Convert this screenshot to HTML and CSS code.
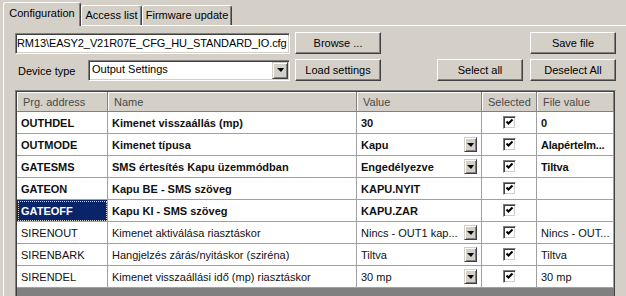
FILE: index.html
```html
<!DOCTYPE html>
<html lang="hu">
<head>
    <meta charset="UTF-8">
    <title>Configuration</title>
    <link rel="stylesheet" href="styles.css">
</head>
<body>
    <!-- tab strip -->
    <div class="tabs">
        <div class="tab active tab-config">Configuration</div>
        <div class="tab tab-access">Access list</div>
        <div class="tab tab-firmware">Firmware update</div>
    </div>

    <div class="panel">
        <div class="toolbar">
            <div class="textbox">RM13\EASY2_V21R07E_CFG_HU_STANDARD_IO.cfg</div>
            <button class="btn">Browse ...</button>
            <div class="spacer"></div>
            <button class="btn">Save file</button>
        </div>

        <div class="toolbar second">
            <label class="label">Device type</label>
            <div class="combo">
                <span class="combo-text">Output Settings</span>
                <span class="combo-btn"><i class="arrow"></i></span>
            </div>
            <button class="btn">Load settings</button>
            <div class="spacer"></div>
            <button class="btn">Select all</button>
            <button class="btn last">Deselect All</button>
        </div>

        <!-- settings grid -->
        <div class="grid">
            <div class="grid-inner">
                <div class="row head">
                    <div class="hcell">Prg. address</div>
                    <div class="hcell">Name</div>
                    <div class="hcell">Value</div>
                    <div class="hcell">Selected</div>
                    <div class="hcell">File value</div>
                </div>

                <div class="row bold">
                    <div class="cell">OUTHDEL</div>
                    <div class="cell">Kimenet visszaállás (mp)</div>
                    <div class="cell">30</div>
                    <div class="cell center"><span class="check"><svg width="9" height="9" viewBox="0 0 9 9"><polyline points="1.5,3.5 3.5,5.5 7.5,1.5" fill="none" stroke="#000" stroke-width="2"/></svg></span></div>
                    <div class="cell file">0</div>
                </div>
                <div class="row bold">
                    <div class="cell">OUTMODE</div>
                    <div class="cell">Kimenet típusa</div>
                    <div class="cell pick">Kapu<span class="drop"><i class="arrow"></i></span></div>
                    <div class="cell center"><span class="check"><svg width="9" height="9" viewBox="0 0 9 9"><polyline points="1.5,3.5 3.5,5.5 7.5,1.5" fill="none" stroke="#000" stroke-width="2"/></svg></span></div>
                    <div class="cell file">Alapértelm...</div>
                </div>
                <div class="row bold">
                    <div class="cell">GATESMS</div>
                    <div class="cell">SMS értesítés Kapu üzemmódban</div>
                    <div class="cell pick">Engedélyezve<span class="drop"><i class="arrow"></i></span></div>
                    <div class="cell center"><span class="check"><svg width="9" height="9" viewBox="0 0 9 9"><polyline points="1.5,3.5 3.5,5.5 7.5,1.5" fill="none" stroke="#000" stroke-width="2"/></svg></span></div>
                    <div class="cell file">Tiltva</div>
                </div>
                <div class="row bold">
                    <div class="cell">GATEON</div>
                    <div class="cell">Kapu BE - SMS szöveg</div>
                    <div class="cell">KAPU.NYIT</div>
                    <div class="cell center"><span class="check"><svg width="9" height="9" viewBox="0 0 9 9"><polyline points="1.5,3.5 3.5,5.5 7.5,1.5" fill="none" stroke="#000" stroke-width="2"/></svg></span></div>
                    <div class="cell file"></div>
                </div>
                <div class="row bold">
                    <div class="cell focus">GATEOFF</div>
                    <div class="cell">Kapu KI - SMS szöveg</div>
                    <div class="cell">KAPU.ZAR</div>
                    <div class="cell center"><span class="check"><svg width="9" height="9" viewBox="0 0 9 9"><polyline points="1.5,3.5 3.5,5.5 7.5,1.5" fill="none" stroke="#000" stroke-width="2"/></svg></span></div>
                    <div class="cell file"></div>
                </div>
                <div class="row">
                    <div class="cell">SIRENOUT</div>
                    <div class="cell">Kimenet aktiválása riasztáskor</div>
                    <div class="cell pick">Nincs - OUT1 kap...<span class="drop"><i class="arrow"></i></span></div>
                    <div class="cell center"><span class="check"><svg width="9" height="9" viewBox="0 0 9 9"><polyline points="1.5,3.5 3.5,5.5 7.5,1.5" fill="none" stroke="#000" stroke-width="2"/></svg></span></div>
                    <div class="cell file">Nincs - OUT...</div>
                </div>
                <div class="row">
                    <div class="cell">SIRENBARK</div>
                    <div class="cell">Hangjelzés zárás/nyitáskor (sziréna)</div>
                    <div class="cell pick">Tiltva<span class="drop"><i class="arrow"></i></span></div>
                    <div class="cell center"><span class="check"><svg width="9" height="9" viewBox="0 0 9 9"><polyline points="1.5,3.5 3.5,5.5 7.5,1.5" fill="none" stroke="#000" stroke-width="2"/></svg></span></div>
                    <div class="cell file">Tiltva</div>
                </div>
                <div class="row">
                    <div class="cell">SIRENDEL</div>
                    <div class="cell">Kimenet visszaállási idő (mp) riasztáskor</div>
                    <div class="cell pick">30 mp<span class="drop"><i class="arrow"></i></span></div>
                    <div class="cell center"><span class="check"><svg width="9" height="9" viewBox="0 0 9 9"><polyline points="1.5,3.5 3.5,5.5 7.5,1.5" fill="none" stroke="#000" stroke-width="2"/></svg></span></div>
                    <div class="cell file">30 mp</div>
                </div>
            </div>
        </div>
    </div>
</body>
</html>
```

FILE: styles.css
```css
* {
    box-sizing: border-box;
    margin: 0;
    padding: 0;
}

body {
    font-family: "Liberation Sans", Arial, sans-serif;
    font-size: 11px;
    color: #000;
    background: #d4d0c8;
    height: 296px;
    overflow: hidden;
}

/* tabs */
.tabs {
    display: flex;
    align-items: flex-end;
    height: 25px;
    padding: 2px 0 0 3px;
}

.tab {
    height: 20px;
    display: flex;
    align-items: center;
    justify-content: center;
    border: 1px solid #fff;
    border-bottom: none;
    border-right-color: #404040;
    border-radius: 3px 3px 0 0;
    box-shadow: inset -1px 0 #808080;
    padding-bottom: 1px;
}

.tab.active {
    height: 24px;
    margin-bottom: -1px;
    position: relative;
    z-index: 1;
    background: #d4d0c8;
    padding-bottom: 4px;
}

.tab-config { width: 78px; }
.tab-access { width: 61px; }
.tab-firmware { width: 90px; }

/* page panel */
.panel {
    margin-left: 3px;
    border-top: 1px solid #fff;
    border-left: 1px solid #fff;
    padding: 6px 10px 0 11px;
}

.toolbar {
    display: flex;
    align-items: center;
    height: 22px;
}

.toolbar.second {
    margin-top: 5px;
}

.spacer {
    flex: 1;
}

.textbox {
    width: 275px;
    height: 21px;
    margin-right: 5px;
    background: #fff;
    border: 1px solid;
    border-color: #808080 #fff #fff #808080;
    box-shadow: inset 1px 1px #404040, inset -1px -1px #d4d0c8;
    padding: 0 1px;
    display: flex;
    align-items: center;
    white-space: nowrap;
    overflow: hidden;
    letter-spacing: -0.1px;
}

.btn {
    width: 86px;
    height: 22px;
    font: inherit;
    color: #000;
    background: #d4d0c8;
    border: 1px solid;
    border-color: #fff #404040 #404040 #fff;
    box-shadow: inset -1px -1px #808080;
}

.btn.last {
    margin-left: 7px;
}

.label {
    width: 73px;
    padding-left: 3px;
    padding-top: 2px;
}

.combo {
    width: 202px;
    height: 21px;
    margin-right: 5px;
    display: flex;
    align-items: center;
    background: #fff;
    border: 1px solid;
    border-color: #808080 #fff #fff #808080;
    box-shadow: inset 1px 1px #404040, inset -1px -1px #d4d0c8;
    padding: 1px;
}

.combo-text {
    flex: 1;
    padding-left: 2px;
    padding-bottom: 3px;
}

.combo-btn,
.drop {
    display: flex;
    align-items: center;
    justify-content: center;
    background: #d4d0c8;
    border: 1px solid;
    border-color: #d4d0c8 #404040 #404040 #d4d0c8;
    box-shadow: inset 1px 1px #fff, inset -1px -1px #808080;
}

.combo-btn {
    width: 16px;
    height: 17px;
}

.arrow {
    width: 0;
    height: 0;
    border-left: 4px solid transparent;
    border-right: 3px solid transparent;
    border-top: 4px solid #000;
}

/* settings grid */
.grid {
    height: 214px;
    margin-top: 9px;
    border: 1px solid #808080;
    border-right-color: #d4d0c8;
}

.grid-inner {
    height: 100%;
    background: #808080;
    border: 1px solid #404040;
    overflow: hidden;
}

.row {
    display: grid;
    grid-template-columns: 91px 249px 125px 55px 77px;
}

.row.bold {
    font-weight: bold;
}

.hcell {
    height: 20px;
    display: flex;
    align-items: center;
    padding-left: 6px;
    color: #4a4a4a;
    background: #d4d0c8;
    border-right: 1px solid #808080;
    border-bottom: 1px solid #808080;
    box-shadow: inset 1px 1px #fff;
}

.cell {
    height: 22px;
    display: flex;
    align-items: center;
    padding: 0 4px;
    background: #fff;
    color: #111;
    border-right: 1px solid #a0a0a0;
    border-bottom: 1px solid #a0a0a0;
    white-space: nowrap;
    overflow: hidden;
}

.cell.file {
    padding: 0 0 0 4px;
}

.row.bold .cell.file {
    letter-spacing: -0.2px;
}

.cell.pick {
    justify-content: space-between;
}

.cell.center {
    justify-content: center;
}

.cell.focus {
    background: #0a246a;
    color: #fff;
    outline: 1px dotted #d4d0c8;
    outline-offset: -2px;
}

.drop {
    width: 13px;
    height: 15px;
}

.check {
    width: 13px;
    height: 13px;
    display: flex;
    align-items: center;
    justify-content: center;
    background: #fff;
    border: 1px solid;
    border-color: #808080 #fff #fff #808080;
    box-shadow: inset 1px 1px #404040, inset -1px -1px #d4d0c8;
}
```
